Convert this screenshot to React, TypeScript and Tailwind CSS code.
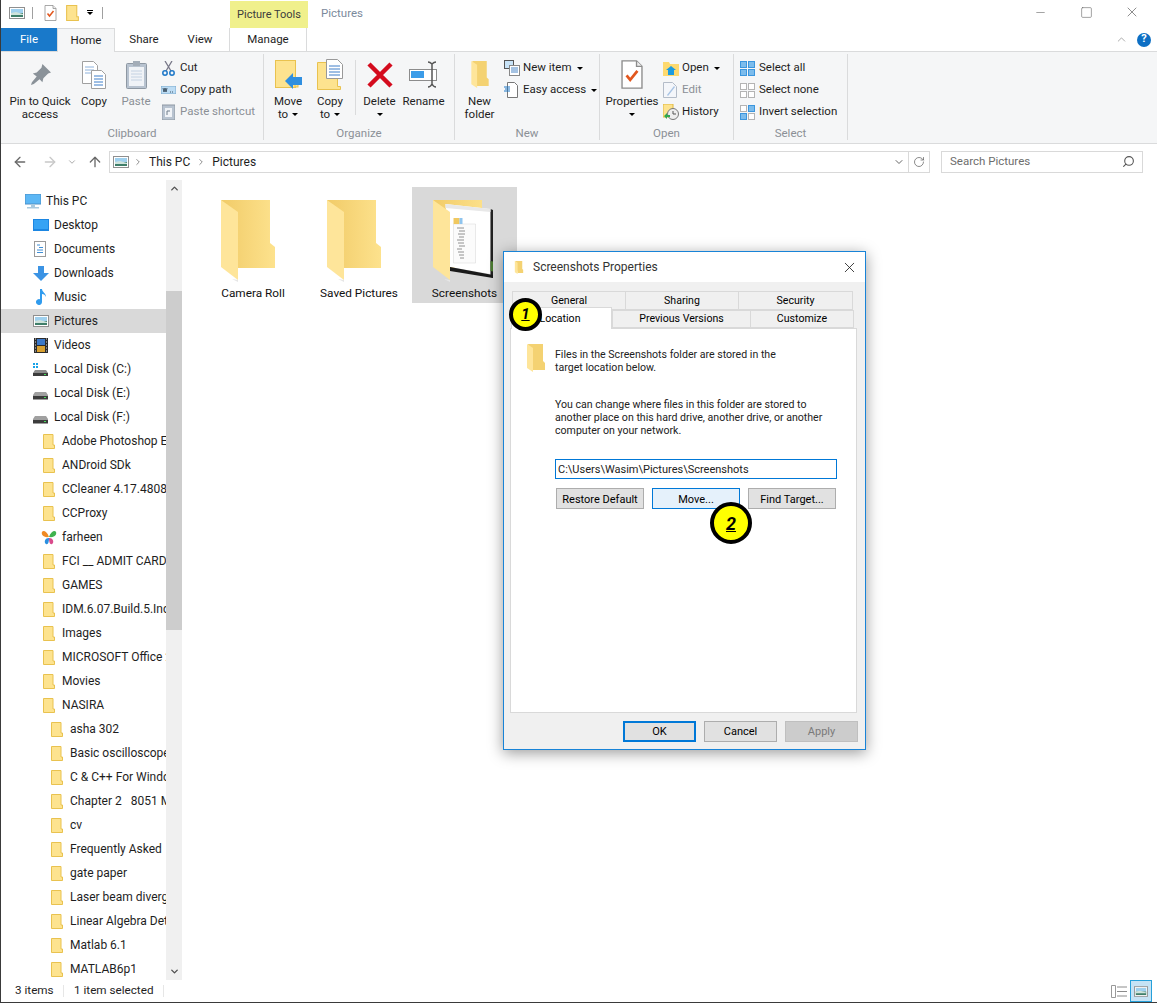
import type { ReactNode } from "react";
import { ArrowLeft, ArrowRight, ArrowUp, ChevronDown, ChevronRight, ChevronUp, Minus, RotateCw, Search, Square, X } from "lucide-react";

function PictureIcon({ className = "w-4 h-3" }: { className?: string }) {
  return (
    <svg viewBox="0 0 16 12" className={className}>
      <rect x="0.5" y="0.5" width="15" height="11" fill="#fff" stroke="#8f8f8f" />
      <rect x="2" y="2" width="12" height="4" fill="#9fd0ee" />
      <rect x="2" y="6" width="12" height="4" fill="#3f7f6a" />
      <path d="M2 6l5-1 7 2v1H2z" fill="#cfe3dc" />
    </svg>
  );
}

function CheckDoc({ className = "w-3 h-4" }: { className?: string }) {
  return (
    <svg viewBox="0 0 24 32" className={className}>
      <path d="M1 1h16l6 6v24H1z" fill="#fff" stroke="#8c8c8c" strokeWidth="1.5" />
      <path d="M17 1v6h6" fill="#eee" stroke="#8c8c8c" strokeWidth="1.5" />
      <path d="M6 17l4 5 8-10" fill="none" stroke="#e2571e" strokeWidth="3" />
    </svg>
  );
}

function SmallFolder({ className = "w-3 h-[15px]" }: { className?: string }) {
  return (
    <svg viewBox="0 0 12 15" className={className}>
      <path d="M.5.5h9.5v10.5h1.5v3.5H.5z" fill="#fde38f" stroke="#e9c24f" />
    </svg>
  );
}

function BigFolder({ id, children }: { id: string; children?: ReactNode }) {
  return (
    <svg viewBox="5 0 74 84" className="w-[74px] h-[84px]">
      <defs>
        <linearGradient id={id} x1="0" x2="1">
          <stop offset="0" stopColor="#f1cb68" />
          <stop offset="1" stopColor="#fde28d" />
        </linearGradient>
      </defs>
      <path d="M10 1h49v43l5 4v21H27z" fill={`url(#${id})`} />
      {children}
      <path d="M10 1l17 12v68L10 68z" fill="#fee59a" />
      <path d="M27 81v2l-6-3z" fill="#e6e6e6" />
    </svg>
  );
}

function ThinFolder({ className }: { className: string }) {
  return (
    <svg viewBox="0 0 18 28" className={className}>
      <path d="M1 0h15v17l2 2v7H6z" fill="#f4d272" />
      <path d="M0 0l6 4v24l-6-4z" fill="#fee59a" />
    </svg>
  );
}

function Caret({ color = "border-t-black" }: { color?: string }) {
  return <span className={`inline-block w-0 h-0 border-x-[3px] border-t-[3px] border-x-transparent ${color}`} />;
}

function LargeButton({ width, icon, lines, disabled, caret }: { width: string; icon: ReactNode; lines: string[]; disabled?: boolean; caret?: "inline" | "below" }) {
  return (
    <div className={`${width} flex flex-col items-center shrink-0`}>
      <div className="h-[41px] w-full flex items-center justify-center">{icon}</div>
      <div className={`leading-[13px] text-center whitespace-nowrap ${disabled ? "text-[#8b9096]" : "text-[#1e1e1e]"}`}>
        {lines.map((l, i) => (
          <div key={l} className="flex items-center justify-center gap-1">
            {l}
            {caret === "inline" && i === lines.length - 1 && <Caret />}
          </div>
        ))}
        {caret === "below" && (
          <div className="h-[13px] flex items-center justify-center">
            <Caret />
          </div>
        )}
      </div>
    </div>
  );
}

function SmallButton({ icon, label, disabled, caret }: { icon: ReactNode; label: string; disabled?: boolean; caret?: boolean }) {
  return (
    <div className={`h-[22px] flex items-center whitespace-nowrap ${disabled ? "text-[#8b9096]" : "text-[#1e1e1e]"}`}>
      <div className="w-[19px] flex items-center shrink-0">{icon}</div>
      <span>{label}</span>
      {caret && (
        <span className="ml-[5px] flex">
          <Caret />
        </span>
      )}
    </div>
  );
}

function RibbonGroup({ width, label, children }: { width: string; label: string; children: ReactNode }) {
  return (
    <div className={`${width} h-[86px] mt-[2px] border-r border-[#dadbdc] flex flex-col shrink-0`}>
      <div className="h-[73px] flex">{children}</div>
      <div className="text-center text-[#8b9096] leading-[14px]">{label}</div>
    </div>
  );
}

function GridIcon({ on }: { on: boolean[] }) {
  return (
    <div className="grid grid-cols-2 gap-px w-[15px] h-[15px]">
      {on.map((v, i) => (
        <span key={i} className={v ? "bg-[#7cbcec] border border-[#3b96de]" : "bg-white border border-[#b4b4b4]"} />
      ))}
    </div>
  );
}

const navRows: { label: string; level: number; icon?: ReactNode; active?: boolean }[] = [
  { label: "This PC", level: 0, icon: <svg viewBox="0 0 16 15" className="w-4 h-[15px]"><rect x="0" y="0" width="16" height="10" fill="#5cb7f5" stroke="#4a90c8" /><rect x="6" y="10" width="4" height="3" fill="#a9c9de" /><rect x="2" y="13" width="12" height="1.5" fill="#a9c9de" /></svg> },
  { label: "Desktop", level: 1, icon: <svg viewBox="0 0 16 12" className="w-4 h-3"><rect width="16" height="12" fill="#1c86e2" /><rect x="1" y="1" width="14" height="9" fill="#36a3f4" /></svg> },
  { label: "Documents", level: 1, icon: <svg viewBox="0 0 12 16" className="w-3 h-4 ml-px"><rect x=".5" y=".5" width="11" height="15" fill="#fff" stroke="#9a9a9a" /><path d="M3 4h3M5 6.5h4M3 9h6M3 11.5h6" stroke="#3f8ed6" /></svg> },
  { label: "Downloads", level: 1, icon: <svg viewBox="0 0 16 15" className="w-4 h-[15px]"><path d="M5 0h6v7h5l-8 8-8-8h5z" fill="#3b93e4" /></svg> },
  { label: "Music", level: 1, icon: <svg viewBox="0 0 12 16" className="w-3 h-4 ml-[2px]"><path d="M5 0h2c0 3 4 4 4 8-1-2-2-3-4-3v8a3 3 0 1 1-2-2.800z" fill="#2f9bee" /></svg> },
  { label: "Pictures", level: 1, active: true, icon: <PictureIcon /> },
  { label: "Videos", level: 1, icon: <svg viewBox="0 0 14 15" className="w-[14px] h-[15px] ml-px"><rect width="14" height="15" fill="#2b2b2b" /><rect x="3" y="1" width="8" height="6" fill="#3b78c8" /><rect x="3" y="8" width="8" height="6" fill="#d8a030" /><path d="M1 1h1M1 4h1M1 7h1M1 10h1M1 13h1M12 1h1M12 4h1M12 7h1M12 10h1M12 13h1" stroke="#ddd" /></svg> },
  { label: "Local Disk (C:)", level: 1, icon: <svg viewBox="0 0 15 13" className="w-[15px] h-[13px]"><path d="M0 0h2v2H0zM3 0h2v2H3zM0 3h2v2H0zM3 3h2v2H3z" fill="#19a3e8" /><path d="M2 7h11l2 3v3H0v-3z" fill="#8b8b8b" /><rect y="10" width="15" height="3" fill="#3c3c3c" /><rect x="11" y="11" width="2" height="1" fill="#47e05a" /></svg> },
  { label: "Local Disk (E:)", level: 1, icon: <svg viewBox="0 0 15 13" className="w-[15px] h-[13px]"><path d="M2 5h11l2 3v4H0V8z" fill="#a0a0a0" /><rect y="9" width="15" height="3.500" fill="#3c3c3c" /><rect x="11" y="10" width="2" height="1" fill="#47e05a" /></svg> },
  { label: "Local Disk (F:)", level: 1, icon: <svg viewBox="0 0 15 13" className="w-[15px] h-[13px]"><path d="M2 5h11l2 3v4H0V8z" fill="#a0a0a0" /><rect y="9" width="15" height="3.500" fill="#3c3c3c" /><rect x="11" y="10" width="2" height="1" fill="#47e05a" /></svg> },
  { label: "Adobe Photoshop Elements", level: 2 },
  { label: "ANDroid SDk", level: 2 },
  { label: "CCleaner 4.17.4808 Final", level: 2 },
  { label: "CCProxy", level: 2 },
  { label: "farheen", level: 2, icon: <svg viewBox="0 0 16 15" className="w-4 h-[15px] -ml-[2px]"><path d="M8 7C6 1 2 0 1 2s1 6 7 5z" fill="#f08a24" /><path d="M8 7c2-6 6-7 7-5s-1 6-7 5z" fill="#3fb34f" /><path d="M8 8c-5 0-5 5-3 6s3-2 3-6z" fill="#2a8fe0" /><path d="M8 8c5 0 5 5 3 6s-3-2-3-6z" fill="#d94a8c" /></svg> },
  { label: "FCI __ ADMIT CARD 2015", level: 2 },
  { label: "GAMES", level: 2 },
  { label: "IDM.6.07.Build.5.Incl.Patch", level: 2 },
  { label: "Images", level: 2 },
  { label: "MICROSOFT Office 2013", level: 2 },
  { label: "Movies", level: 2 },
  { label: "NASIRA", level: 2 },
  { label: "asha 302", level: 3 },
  { label: "Basic oscilloscope operation", level: 3 },
  { label: "C & C++ For Windows", level: 3 },
  { label: "Chapter 2   8051 Microcontroller", level: 3 },
  { label: "cv", level: 3 },
  { label: "Frequently Asked", level: 3 },
  { label: "gate paper", level: 3 },
  { label: "Laser beam divergence", level: 3 },
  { label: "Linear Algebra Determinants", level: 3 },
  { label: "Matlab 6.1", level: 3 },
  { label: "MATLAB6p1", level: 3 },
];

const levelPad = ["pl-[24px]", "pl-[32px]", "pl-[42px]", "pl-[50px]"];
const levelGap = ["w-[21px]", "w-[21px]", "w-[19px]", "w-[19px]"];

function NavRow({ label, level, icon, active }: { label: string; level: number; icon?: ReactNode; active?: boolean }) {
  return (
    <div className={`h-[24px] flex items-center whitespace-pre overflow-hidden ${levelPad[level]} ${active ? "bg-[#d9d9d9]" : ""}`}>
      <div className={`${levelGap[level]} flex items-center shrink-0`}>{icon ?? <SmallFolder />}</div>
      <span>{label}</span>
    </div>
  );
}

function DialogButton({ label, width = "w-[88px]", className = "border-[#adadad] bg-[#e1e1e1] text-black" }: { label: string; width?: string; className?: string }) {
  return <div className={`${width} h-[21px] border flex items-center justify-center pt-px text-[11px] ${className}`}>{label}</div>;
}

function Badge({ n, className }: { n: number; className: string }) {
  return (
    <div className={`absolute z-20 rounded-full bg-[#ffff00] border-black flex items-center justify-center font-bold italic underline text-black ${className}`}>{n}</div>
  );
}

export default function App() {
  return (
    <div className="relative w-[1157px] h-[1003px] overflow-hidden bg-white border-l border-b border-[#3a3a3a] text-[11.5px] text-[#1e1e1e] font-['Roboto',sans-serif] flex flex-col">
      {/* title bar */}
      <div className="h-[28px] flex shrink-0">
        <div className="w-[229px] flex items-center pl-[8px] pb-[3px]">
          <PictureIcon />
          <span className="ml-[7px] w-px h-[12px] bg-[#a0a0a0]" />
          <CheckDoc className="ml-[11px] w-[13px] h-[16px]" />
          <SmallFolder className="ml-[9px] w-[13px] h-[16px]" />
          <span className="ml-[8px] flex flex-col items-center gap-px">
            <span className="w-[6px] h-px bg-black" />
            <Caret />
          </span>
          <span className="ml-[9px] w-px h-[12px] bg-[#a0a0a0]" />
        </div>
        <div className="w-[78px] mt-px bg-[#f0f08c] flex items-center justify-center pt-[2px] text-[#3c3c3c] text-[11px]">Picture Tools</div>
        <div className="ml-[13px] pt-[5px] text-[#7b8a9c]">Pictures</div>
        <div className="ml-auto mr-[2px] flex">
          <div className="w-[46px] flex items-center justify-center pb-[4px] text-[#555]"><Minus size={13} strokeWidth={1} /></div>
          <div className="w-[46px] flex items-center justify-center pb-[4px] text-[#555]"><Square size={13} strokeWidth={1} /></div>
          <div className="w-[46px] flex items-center justify-center pb-[4px] text-[#555]"><X size={16} strokeWidth={1} /></div>
        </div>
      </div>
      {/* tabs */}
      <div className="h-[24px] flex shrink-0 border-b border-[#dadbdc]">
        <div className="w-[56px] bg-[#1979ca] text-white flex items-center justify-center">File</div>
        <div className="w-[58px] h-[24px] bg-[#f5f6f7] border-x border-t border-[#dadbdc] flex items-center justify-center">Home</div>
        <div className="w-[58px] flex items-center justify-center">Share</div>
        <div className="w-[54px] flex items-center justify-center">View</div>
        <div className="ml-[2px] w-[78px] border-x border-[#dadbdc] flex items-center justify-center">Manage</div>
        <div className="ml-auto flex items-center pr-[6px] gap-[9px]">
          <ChevronUp size={13} strokeWidth={1} className="text-[#666]" />
          <span className="w-[14px] h-[14px] rounded-full bg-[#0d6fc4] text-white text-[11px] font-bold flex items-center justify-center">?</span>
        </div>
      </div>
      {/* ribbon */}
      <div className="h-[92px] bg-[#f5f6f7] border-b border-[#dadbdc] flex shrink-0">
        <RibbonGroup width="w-[263px]" label="Clipboard">
          <div className="ml-[4px] flex">
            <LargeButton width="w-[70px]" lines={["Pin to Quick", "access"]} icon={<svg viewBox="0 0 22 22" className="w-[21px] h-[21px]"><path d="M13 0l9 9-3 1-5 5-1 4-3-3-6 5-3 1 1-3 5-6-4-3 4-1 5-5z" fill="#8a9299" /></svg>} />
            <LargeButton width="w-[38px]" lines={["Copy"]} icon={<svg viewBox="0 0 24 28" className="w-[24px] h-[28px]"><path d="M.5.5h11l4 4v18H.5z" fill="#fff" stroke="#a0a0a0" /><path d="M3 6h9M3 9h9M3 12h9" stroke="#8eb2dc" /><path d="M9.500 9.500h10l4 4v14h-14z" fill="#fff" stroke="#a0a0a0" /><path d="M12 15h9M12 18h9M12 21h9M12 24h9" stroke="#3f7fc9" /></svg>} />
            <div className="w-[4px]" />
            <LargeButton width="w-[38px]" lines={["Paste"]} disabled icon={<svg viewBox="0 0 21 29" className="w-[21px] h-[29px]"><rect x=".5" y="3.500" width="20" height="25" rx="1" fill="#b8c3d0" stroke="#8e98a3" /><rect x="3" y="7" width="15" height="19" fill="#f0f3f7" /><path d="M5 11h11M5 14h11M5 17h11M5 20h11" stroke="#c4d2e2" /><rect x="7" y="1" width="7" height="5" fill="#a3adb8" /></svg>} />
          </div>
          <div className="ml-[6px] flex flex-col pt-[3px]">
            <SmallButton label="Cut" icon={<svg viewBox="0 0 13 15" className="w-[13px] h-[15px] ml-px"><path d="M3 0l6 10M10 0L4 10" stroke="#778" strokeWidth="1.300" /><circle cx="3" cy="12" r="2.200" fill="none" stroke="#1e78c8" strokeWidth="1.500" /><circle cx="10" cy="12" r="2.200" fill="none" stroke="#1e78c8" strokeWidth="1.500" /></svg>} />
            <SmallButton label="Copy path" icon={<svg viewBox="0 0 15 8" className="w-[15px] h-[8px]"><rect width="15" height="8" fill="#bcdcf4" stroke="#7aa9cc" /><path d="M2 2l1 4 1-4 1 4 1-4M9 6h1M11 6h1" stroke="#234" fill="none" strokeWidth=".8" /></svg>} />
            <SmallButton label="Paste shortcut" disabled icon={<svg viewBox="0 0 13 16" className="w-[13px] h-[16px] ml-px"><rect y="1" width="13" height="15" fill="#b8c3d0" stroke="#8e98a3" /><rect x="3" y="4" width="7" height="9" fill="#f0f3f7" /><path d="M5 11V7h3" stroke="#6f7c8a" fill="none" /></svg>} />
          </div>
        </RibbonGroup>
        <RibbonGroup width="w-[191px]" label="Organize">
          <div className="ml-[4px] flex">
            <LargeButton width="w-[40px]" lines={["Move", "to"]} caret="inline" icon={<svg viewBox="0 0 27 29" className="w-[27px] h-[29px]"><rect x=".5" y=".5" width="20" height="27" fill="#fde38f" stroke="#e9c24f" /><rect x="20" y="18" width="3" height="9" fill="#fde38f" stroke="#e9c24f" /><path d="M10 21l8-8v4h9v8h-9v4z" fill="#2f8fe0" /></svg>} />
            <div className="w-[2px]" />
            <LargeButton width="w-[40px]" lines={["Copy", "to"]} caret="inline" icon={<svg viewBox="0 0 26 31" className="w-[26px] h-[31px]"><path d="M.5 3.500h20v24h3v3H.5z" fill="#fde38f" stroke="#e9c24f" /><path d="M9.500.5h11l5 5v14h-16z" fill="#fff" stroke="#999" /><path d="M12 7h11M12 10h11M12 13h11M12 16h11" stroke="#3f7fc9" /></svg>} />
            <div className="w-[6px] h-[55px] mt-[6px] border-r border-[#dadbdc]" />
            <div className="w-[3px]" />
            <LargeButton width="w-[41px]" lines={["Delete"]} caret="below" icon={<svg viewBox="0 0 26 26" className="w-[26px] h-[26px]"><path d="M2 2l22 22M24 2L2 24" stroke="#d40b1d" strokeWidth="4.500" /></svg>} />
            <div className="w-[3px]" />
            <LargeButton width="w-[41px]" lines={["Rename"]} icon={<svg viewBox="0 0 29 27" className="w-[29px] h-[27px]"><rect x=".5" y="8.500" width="27" height="11" fill="#fff" stroke="#8c8c8c" /><rect x="2" y="10" width="13" height="7" fill="#3b9ce8" /><path d="M19 1c2 0 3 1 4 2 1-1 2-2 4-2M23 3v20M19 26c2 0 3-1 4-3 1 2 2 3 4 3" fill="none" stroke="#555" strokeWidth="1.500" /></svg>} />
          </div>
        </RibbonGroup>
        <RibbonGroup width="w-[145px]" label="New">
          <LargeButton width="w-[49px]" lines={["New", "folder"]} icon={<ThinFolder className="w-[18px] h-[27px]" />} />
          <div className="flex flex-col pt-[3px]">
            <SmallButton label="New item" caret icon={<svg viewBox="0 0 16 16" className="w-4 h-4"><rect x=".5" y=".5" width="9" height="8" fill="#c8e3f7" stroke="#555" /><rect x="5.500" y="5.500" width="10" height="10" fill="#fff" stroke="#888" /><path d="M7 8h7M7 10h7M7 12h7" stroke="#4a86c6" /></svg>} />
            <SmallButton label="Easy access" caret icon={<svg viewBox="0 0 14 16" className="w-[14px] h-4"><path d="M3.500.5h7l3 3v12h-10z" fill="#fff" stroke="#777" /><path d="M0 5h6M1 7h5M0 9h6" stroke="#1e78c8" /></svg>} />
          </div>
        </RibbonGroup>
        <RibbonGroup width="w-[134px]" label="Open">
          <div className="ml-[6px] flex">
            <LargeButton width="w-[52px]" lines={["Properties"]} caret="below" icon={<CheckDoc className="w-[22px] h-[29px]" />} />
            <div className="ml-[5px] flex flex-col pt-[3px]">
              <SmallButton label="Open" caret icon={<svg viewBox="0 0 16 15" className="w-4 h-[15px]"><path d="M0 1h6l1 2h9v12H0z" fill="#fdd96f" /><path d="M8 5l5 4h-2v5H5V9H3z" fill="#1b9be0" /></svg>} />
              <SmallButton label="Edit" disabled icon={<svg viewBox="0 0 14 16" className="w-[14px] h-4"><path d="M.5.5h9l4 4v11H.5z" fill="#f4f6fa" stroke="#b4bcc8" /><path d="M4 13l7-9 1 1-7 9z" fill="#a8c4e4" /></svg>} />
              <SmallButton label="History" icon={<svg viewBox="0 0 16 16" className="w-4 h-4"><rect x="0" y="0" width="10" height="13" fill="#fde38f" stroke="#e0b840" /><circle cx="10" cy="10" r="5.500" fill="#eee" stroke="#777" /><path d="M10 7v3h3" fill="none" stroke="#555" /><path d="M1 12l3-3v2h3v2H4v2z" fill="#2fa84f" /></svg>} />
            </div>
          </div>
        </RibbonGroup>
        <RibbonGroup width="w-[114px]" label="Select">
          <div className="ml-[6px] flex flex-col pt-[3px]">
            <SmallButton label="Select all" icon={<GridIcon on={[true, true, true, true]} />} />
            <SmallButton label="Select none" icon={<GridIcon on={[false, false, false, false]} />} />
            <SmallButton label="Invert selection" icon={<GridIcon on={[false, true, true, false]} />} />
          </div>
        </RibbonGroup>
      </div>
      {/* address bar */}
      <div className="h-[36px] flex items-center shrink-0 pb-[1px]">
        <div className="w-[108px] flex items-center pl-[11px] text-[#6a6a6a]">
          <ArrowLeft size={16} strokeWidth={2} />
          <ArrowRight size={16} strokeWidth={2} className="ml-[14px] text-[#c8c8c8]" />
          <ChevronDown size={10} strokeWidth={2} className="ml-[9px] text-[#9a9a9a]" />
          <ArrowUp size={16} strokeWidth={2} className="ml-[10px]" />
        </div>
        <div className="w-[821px] h-[22px] border border-[#d9d9d9] flex items-center pl-[3px] text-[12px]">
          <PictureIcon />
          <ChevronRight size={10} strokeWidth={2} className="ml-[4px] text-[#777]" />
          <span className="ml-[6px]">This PC</span>
          <ChevronRight size={10} strokeWidth={2} className="ml-[6px] text-[#777]" />
          <span className="ml-[6px]">Pictures</span>
          <ChevronDown size={12} strokeWidth={2} className="ml-auto mr-[3px] text-[#666]" />
          <div className="w-[21px] h-full border-l border-[#d9d9d9] flex items-center justify-center text-[#666]">
            <RotateCw size={12} strokeWidth={1.500} />
          </div>
        </div>
        <div className="ml-[11px] w-[202px] h-[22px] border border-[#d9d9d9] flex items-center pl-[8px] pr-[7px] text-[#6d6d6d]">
          Search Pictures
          <Search size={13} strokeWidth={2} className="ml-auto -scale-x-100 text-[#555]" />
        </div>
      </div>
      {/* body */}
      <div className="h-[800px] flex shrink-0">
        <div className="w-[165px] pt-[9px] shrink-0 overflow-hidden text-[12px]">
          {navRows.map((r) => (
            <NavRow key={r.label} {...r} />
          ))}
        </div>
        <div className="w-[16px] flex flex-col bg-[#f0f0f0] shrink-0">
          <div className="h-[111px] flex justify-center pt-[3px]"><ChevronUp size={11} strokeWidth={3} className="text-[#505050]" /></div>
          <div className="h-[339px] bg-[#cdcdcd]" />
          <div className="flex-1 flex justify-center items-end pb-[3px]"><ChevronDown size={11} strokeWidth={3} className="text-[#505050]" /></div>
        </div>
        <div className="flex pl-[18px] pt-[7px] items-start text-[11.8px]">
          {["Camera Roll", "Saved Pictures", "Screenshots"].map((name, i) => (
            <div key={name} className={`h-[116px] flex flex-col items-center ${i === 2 ? "bg-[#d9d9d9] w-[105px]" : "w-[106px]"}`}>
              <div className="h-[98px] pt-[12px]">
                <BigFolder id={`folder${i}`}>
                  {i === 2 && (
                    <g>
                      <path d="M22.500 5l45 5v65l-40.500-7z" fill="#fff" />
                      <path d="M67.500 10l2.500 1v68l-2.500-1z" fill="#222" />
                      <path d="M27 68l43 8v3L27 72z" fill="#1a1a1a" />
                      <path d="M67.500 62l2.500 .500v10l-2.500-.500z" fill="#4a7a30" />
                      <path d="M22.500 5l45 5v3l-45-4z" fill="#e8e8e8" />
                      <path d="M30.500 25h22v39h-22z" fill="#fbfbfb" stroke="#d4d4d4" strokeWidth=".5" />
                      <path d="M30.500 19h6v6h-6z" fill="#f0c860" />
                      <path d="M36.500 19h3v6h-3z" fill="#8fc4ee" />
                      <path d="M34 29h7M36 32h6M35 35h7M36 38h5M34 41h7M35 44h6M36 47h6M34 50h5M35 53h6M36 56h5M37 59h4" stroke="#777" strokeWidth=".8" />
                    </g>
                  )}
                </BigFolder>
              </div>
              <div className="leading-[16px] text-[#111]">{name}</div>
            </div>
          ))}
        </div>
      </div>
      {/* status bar */}
      <div className="h-[22px] flex items-center shrink-0 relative text-[11.7px]">
        <span className="ml-[14px] w-[48px]">3 items</span>
        <span className="w-px h-[12px] bg-[#e6e6e6]" />
        <span className="ml-[10px] w-[89px]">1 item selected</span>
        <span className="w-px h-[12px] bg-[#e6e6e6]" />
        <div className="ml-auto flex items-center pr-[5px]">
          <svg viewBox="0 0 16 13" className="w-[16px] h-[13px] mr-[3px]">
            <path d="M.5.500h4v12h-4z" fill="#fff" stroke="#999" />
            <path d="M6 2h10M6 6.500h10M6 11h10" stroke="#8c8c8c" />
          </svg>
          <div className="w-[22px] h-[22px] bg-[#c6e3f5] border border-[#26a0da] flex items-center justify-center">
            <PictureIcon className="w-[14px] h-[11px]" />
          </div>
        </div>
      </div>
      {/* properties dialog */}
      <div className="absolute left-[502px] top-[251px] w-[363px] h-[499px] border border-[#1883d7] bg-[#f0f0f0] shadow-[0_3px_14px_rgba(0,0,0,0.4)] flex flex-col text-[10.6px]">
        <div className="h-[30px] bg-white flex items-center pl-[10px] shrink-0 text-[#333] text-[12px]">
          <ThinFolder className="w-[10px] h-[13px]" />
          <span className="ml-[9px]">Screenshots Properties</span>
          <X size={17} strokeWidth={1.200} className="ml-auto mr-[7px] text-[#222]" />
        </div>
        <div className="mt-[9px] ml-[8px] flex h-[19px] shrink-0">
          {[["General", "w-[114px]"], ["Sharing", "w-[114px]"], ["Security", "w-[115px]"]].map(([t, w]) => (
            <div key={t} className={`${w} -ml-px first:ml-0 border border-[#d9d9d9] bg-[#f0f0f0] flex items-center justify-center pt-px text-black`}>{t}</div>
          ))}
        </div>
        <div className="ml-[7px] flex h-[18px] shrink-0 relative z-10">
          <div className="w-[101px] h-[22px] -mt-[3px] bg-white border-x border-t border-[#d9d9d9] flex items-center justify-center pr-[3px] text-black">Location</div>
          <div className="w-[139px] border border-[#d9d9d9] flex items-center justify-center text-black">Previous Versions</div>
          <div className="w-[104px] -ml-px border border-[#d9d9d9] flex items-center justify-center text-black">Customize</div>
        </div>
        <div className="ml-[6px] w-[347px] h-[385px] bg-white border border-[#d9d9d9] pl-[44px] pt-[19px] shrink-0 relative leading-[13px] text-[#222]">
          <ThinFolder className="absolute left-[16px] top-[15px] w-[18px] h-[28px]" />
          <p>Files in the Screenshots folder are stored in the<br />target location below.</p>
          <p className="mt-[24px]">You can change where files in this folder are stored to<br />another place on this hard drive, another drive, or another<br />computer on your network.</p>
          <div className="mt-[22px] w-[282px] h-[20px] border border-[#0078d7] flex items-center pl-[2px] text-[11px]">C:\Users\Wasim\Pictures\Screenshots</div>
          <div className="mt-[9px] ml-px flex gap-[8px]">
            <DialogButton label="Restore Default" />
            <DialogButton label="Move..." className="border-[#0078d7] bg-[#e5f1fb] text-black" />
            <DialogButton label="Find Target..." />
          </div>
        </div>
        <div className="mt-[8px] pr-[7px] flex justify-end gap-[8px]">
          <DialogButton label="OK" width="w-[73px]" className="border-2 border-[#0078d7] bg-[#e1e1e1] text-black" />
          <DialogButton label="Cancel" width="w-[73px]" />
          <DialogButton label="Apply" width="w-[73px]" className="border-[#bfbfbf] bg-[#cccccc] text-[#7a7a7a]" />
        </div>
      </div>
      <Badge n={1} className="left-[508px] top-[298px] w-[33px] h-[33px] border-[4px] text-[15px]" />
      <Badge n={2} className="left-[709px] top-[502px] w-[42px] h-[42px] border-[4px] text-[18px]" />
    </div>
  );
}
